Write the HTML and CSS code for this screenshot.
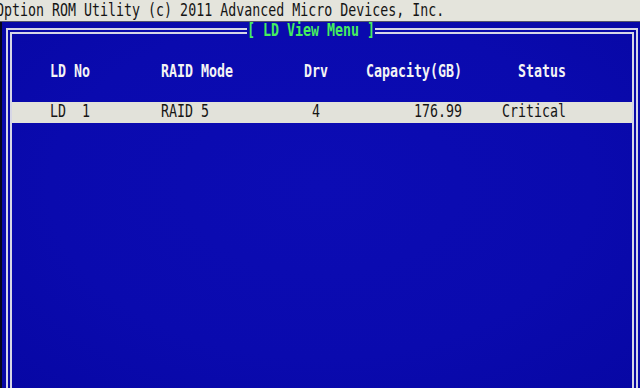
FILE: index.html
```html
<!DOCTYPE html>
<html>
<head>
<meta charset="utf-8">
<link rel="stylesheet" href="styles.css">
</head>
<body>
<div class="screen">
  <div class="topbar"><span class="glyph">Option ROM Utility (c) 2011 Advanced Micro Devices, Inc.</span></div>
  <div class="main">
    <div class="frame">
      <div class="title"><span class="glyph">[ LD View Menu ]</span></div>
      <div class="table">
        <div class="row head">
          <span class="cell c1">LD No</span>
          <span class="cell c2">RAID Mode</span>
          <span class="cell c3">Drv</span>
          <span class="cell c4">Capacity(GB)</span>
          <span class="cell c5">Status</span>
        </div>
        <div class="row sel">
          <span class="cell c1">LD  1</span>
          <span class="cell c2">RAID 5</span>
          <span class="cell c3">4</span>
          <span class="cell c4">176.99</span>
          <span class="cell c5">Critical</span>
        </div>
      </div>
    </div>
  </div>
</div>
</body>
</html>
```
FILE: styles.css
```css
html, body {
  margin: 0;
  background: #000;
}
.screen {
  width: 640px;
  height: 388px;
  overflow: hidden;
  display: flex;
  flex-direction: column;
  font-family: "DejaVu Sans Mono", "Liberation Mono", monospace;
  font-size: 13.3px;
}
.glyph {
  display: inline-block;
  transform: scaleY(1.35);
  white-space: pre;
}
.topbar {
  height: 21px;
  line-height: 22px;
  background: #e4e4dc;
  color: #141414;
  text-indent: -2px;
  white-space: pre;
  overflow: hidden;
  border-bottom: 1px solid #55556a;
}
.main {
  flex: 1;
  display: flex;
  padding: 6px 2px 0 4px;
  border-left: 2px solid #06061c;
  background: radial-gradient(ellipse at 50% 45%, #0c0cb4 0%, #0a0aae 60%, #0707a4 100%);
}
.frame {
  position: relative;
  flex: 1;
  border: 6px double #d6d6e6;
  border-bottom: none;
}
.title {
  position: absolute;
  top: -11px;
  left: 235px;
  height: 16px;
  line-height: 16px;
  color: #46ee5e;
  background: #0a0aae;
  font-weight: bold;
}
.table {
  display: flex;
  flex-direction: column;
  padding-top: 30px;
  gap: 22px;
}
.row {
  display: grid;
  grid-template-columns: 111px 143px 24px 134px 104px;
  padding-left: 38px;
}
.cell {
  display: block;
  white-space: pre;
  transform: scaleY(1.35);
}
.head {
  height: 16px;
  line-height: 16px;
  color: #f4f4f4;
  font-weight: bold;
}
.sel {
  height: 21px;
  line-height: 19px;
  background: #e2e2da;
  color: #151515;
}
.c3 { text-align: center; }
.c4 { text-align: right; }
.c5 { text-align: right; }
```
